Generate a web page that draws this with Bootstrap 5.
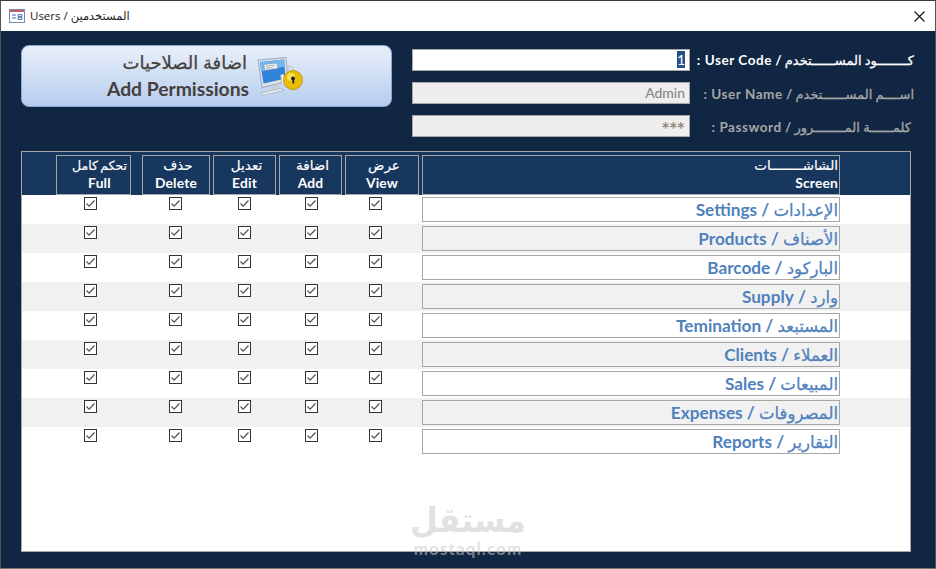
<!DOCTYPE html>
<html lang="ar">
<head>
<meta charset="utf-8">
<title>Users</title>
<link href="https://cdn.jsdelivr.net/npm/bootstrap@5.3.0/dist/css/bootstrap.min.css" rel="stylesheet">
<style>
html,body{height:569px;overflow:hidden;background:#3a3a3a;}
body{font-family:"Lato","DejaVu Sans",sans-serif;}
.app-win{height:568px;margin-top:1px;border-left:1px solid #555;border-right:1px solid #555;border-bottom:1px solid #777;position:relative;overflow:hidden;}
.title-bar{height:30px;background:#fff;padding:0 0 0 8px;flex:none;}
.title-text{font-family:"Open Sans","DejaVu Sans",sans-serif;font-size:11.5px;color:#222;margin-left:5px;}
.close-x{margin-left:auto;margin-right:10px;}
.form-area{background:#112642;padding:14px 0 0 20px;}
.perm-btn{width:371px;height:62px;border:1px solid #8aa8d2;border-radius:8px;background:linear-gradient(#e9eff9,#b6cdee);color:#453f3c;padding-right:88px;}
.perm-ar{font-size:18px;line-height:26px;-webkit-text-stroke:.25px #453f3c;padding-right:2px;}
.perm-en{font-weight:700;font-size:19.3px;line-height:28px;}
.perm-ico{position:relative;top:1px;}
.fields{margin-left:20px;margin-top:4px;gap:11px;width:504px;}
.fld{height:22px;}
.fld-box{width:278px;flex:none;height:22px;border:1px solid #a6a6a6;background:#eee;color:#808080;font-size:14px;text-align:right;padding:0 4px 0 3px;line-height:20px;}
.fld-box.on{background:#fff;color:#fff;}
.fld-box.stars{font-family:"DejaVu Sans",sans-serif;font-size:13.5px;font-weight:700;color:#8f8379;line-height:22px;letter-spacing:.6px;}
.sel{background:#264f8b;display:inline-block;width:8px;line-height:17px;margin-top:1px;font-size:14px;text-align:center;}
.fld-lbl{flex:1;font-size:13.5px;font-weight:700;color:#a6a6a6;padding-right:2px;padding-top:2px;white-space:nowrap;text-align:right;letter-spacing:.55px;}
.fld-lbl.on{color:#fff;padding-top:0;}
.fld-lbl.pw{padding-right:5px;}
.fld-lbl span{font-size:13px;font-weight:400;letter-spacing:0;-webkit-text-stroke:.3px currentColor;}
.panel-box{width:890px;height:401px;margin-top:14px;background:#fff;border:1px solid #a6a6a6;}
.head-row{height:43px;background:#17375e;padding:3px 0 0 34px;}
.hc{height:40px;border:1px solid #a6a6a6;color:#fff;font-weight:700;font-size:13.8px;text-align:center;line-height:16px;margin-right:3px;letter-spacing:.2px;white-space:nowrap;}
.hc span{display:block;}
.hc .ar{font-size:13.5px;font-weight:400;line-height:19px;padding-left:4px;letter-spacing:0;-webkit-text-stroke:.2px #fff;}
.w-full{width:75px;margin-right:11px;padding-left:12px;}
.hc.w-full .ar{padding-left:0;font-size:12.5px;word-spacing:-1px;}
.w-del{width:68px;}
.w-edit{width:63px;}
.w-add{width:63px;}
.w-view{width:74px;}
.w-scr{width:418px;text-align:right;padding-right:1px;margin-right:0;}
.hc.w-scr .ar{padding-left:0;}
.data-row{height:29px;padding-top:2px;}
.data-row.alt{background:#f1f1f1;}
.form-check-input.chk{width:13px;height:13px;margin:0;border:1px solid #333;border-radius:0;background-color:#fff;opacity:1;flex:none;box-shadow:none;
background-image:url("data:image/svg+xml,%3Csvg xmlns='http://www.w3.org/2000/svg' viewBox='0 0 13 13'%3E%3Cpath d='M2.5 6.5l2.6 2.6 5.4-5.6' fill='none' stroke='%23555' stroke-width='1.3'/%3E%3C/svg%3E");background-size:13px 13px;}
.chk-a{margin-left:62px!important;}
.chk-b{margin-left:72px!important;}
.chk-c{margin-left:56px!important;}
.chk-d{margin-left:54px!important;}
.chk-e{margin-left:51px!important;}
.scr-cell{width:418px;height:25px;margin-left:40px;border:1px solid #a6a6a6;color:#4f81bd;font-weight:700;font-size:17.2px;line-height:23px;text-align:right;padding-right:1px;white-space:nowrap;}
.scr-cell span{font-size:16.5px;font-weight:400;-webkit-text-stroke:.25px #4f81bd;}
.alt .scr-cell{background:#f1f1f1;}
.wm{position:absolute;left:397px;top:501px;width:140px;text-align:center;color:#c9c9c9;opacity:.55;pointer-events:none;line-height:1;}
.wm-ar{font-size:34px;line-height:34px;font-weight:700;display:block;transform:scaleX(.93);}
.wm-en{font-size:17px;line-height:20px;font-weight:700;display:block;margin-top:3px;letter-spacing:1.1px;}
</style>
</head>
<body>
<div class="app-win d-flex flex-column">
  <div class="title-bar d-flex align-items-center">
    <svg width="16" height="14" viewBox="0 0 16 14"><rect x=".5" y=".5" width="15" height="13" fill="#fff" stroke="#7d8aa3"/><rect x="1" y="1" width="14" height="2" fill="#b9616a"/><path d="M3 6h4M3 9h4" stroke="#3f6db0" stroke-width="1.2"/><path d="M9 5.5h4v2H9zM9 8.5h4v2H9z" fill="#dfe8f5" stroke="#3f6db0" stroke-width=".8"/></svg>
    <span class="title-text" dir="ltr">Users / المستخدمين</span>
    <svg class="close-x" width="11" height="11" viewBox="0 0 11 11"><path d="M.5.5l10 10M10.5.5l-10 10" stroke="#111" stroke-width="1.1"/></svg>
  </div>
  <div class="form-area flex-grow-1">
    <div class="d-flex align-items-start">
      <div class="perm-btn d-flex justify-content-end align-items-center gap-2">
        <div class="text-end">
          <div class="perm-ar">اضافة الصلاحيات</div>
          <div class="perm-en">Add Permissions</div>
        </div>
        <svg class="perm-ico" width="46" height="40" viewBox="0 0 46 40">
          <path d="M1 3l28-2.500 2 24-26 6z" fill="#dbe1ea" stroke="#8e98a8" stroke-width=".8"/>
          <path d="M3 5l24-2.500 1.500 19-22 5z" fill="#2f83d8"/>
          <path d="M3 5l24-2.500 1 7-24 5z" fill="#72b7ef"/>
          <path d="M7 7.500l13-1.500.6 5.500-13 1.800z" fill="#eef2f7" stroke="#7d8796" stroke-width=".5"/>
          <path d="M9 9.200l9-1M9 11.200l7-.8" stroke="#8b95a3" stroke-width=".7"/>
          <path d="M13 29l9-2 1 5-9 2z" fill="#c9d0da"/>
          <path d="M4 36l20-4.500 3 2-22 5z" fill="#e9edf2" stroke="#9aa3b0" stroke-width=".6"/>
          <path d="M25 27l-1.500-9 3-1 3 7" fill="#eef0f3" stroke="#9ca3ad" stroke-width=".6"/>
          <path d="M30 13l2-4 4 2 1 5" fill="none" stroke="#c8cdd4" stroke-width="1.800"/>
          <circle cx="36" cy="23" r="9.500" fill="#e9bd07" stroke="#b38e05" stroke-width=".8"/>
          <circle cx="34" cy="20" r="4" fill="#f8e25b"/>
          <circle cx="36" cy="21.500" r="2" fill="#222"/>
          <path d="M36 22l.5 4.500" stroke="#222" stroke-width="1.700"/>
        </svg>
      </div>
      <div class="fields d-flex flex-column">
        <div class="fld d-flex align-items-center">
          <div class="fld-box on"><span class="sel">1</span></div>
          <div class="fld-lbl on" dir="rtl"><span>كــــــــود المســــــتخدم</span> / User Code :</div>
        </div>
        <div class="fld d-flex align-items-center">
          <div class="fld-box">Admin</div>
          <div class="fld-lbl" dir="rtl"><span>اســــم المســــــتخدم</span> / User Name :</div>
        </div>
        <div class="fld d-flex align-items-center">
          <div class="fld-box stars">***</div>
          <div class="fld-lbl pw" dir="rtl"><span>كلمــــــة المــــــــرور</span> / Password :</div>
        </div>
      </div>
    </div>
    <div class="panel-box">
      <div class="head-row d-flex">
        <div class="hc w-full"><span class="ar">تحكم كامل</span><span>Full</span></div>
        <div class="hc w-del"><span class="ar">حذف</span><span>Delete</span></div>
        <div class="hc w-edit"><span class="ar">تعديل</span><span>Edit</span></div>
        <div class="hc w-add"><span class="ar">اضافة</span><span>Add</span></div>
        <div class="hc w-view"><span class="ar">عرض</span><span>View</span></div>
        <div class="hc w-scr"><span class="ar">الشاشــــــــات</span><span>Screen</span></div>
      </div>
      <div class="data-row d-flex align-items-start"><input class="form-check-input chk chk-a" type="checkbox" checked><input class="form-check-input chk chk-b" type="checkbox" checked><input class="form-check-input chk chk-c" type="checkbox" checked><input class="form-check-input chk chk-d" type="checkbox" checked><input class="form-check-input chk chk-e" type="checkbox" checked><div class="scr-cell" dir="rtl"><span>الإعدادات</span> / Settings</div></div>
      <div class="data-row alt d-flex align-items-start"><input class="form-check-input chk chk-a" type="checkbox" checked><input class="form-check-input chk chk-b" type="checkbox" checked><input class="form-check-input chk chk-c" type="checkbox" checked><input class="form-check-input chk chk-d" type="checkbox" checked><input class="form-check-input chk chk-e" type="checkbox" checked><div class="scr-cell" dir="rtl"><span>الأصناف</span> / Products</div></div>
      <div class="data-row d-flex align-items-start"><input class="form-check-input chk chk-a" type="checkbox" checked><input class="form-check-input chk chk-b" type="checkbox" checked><input class="form-check-input chk chk-c" type="checkbox" checked><input class="form-check-input chk chk-d" type="checkbox" checked><input class="form-check-input chk chk-e" type="checkbox" checked><div class="scr-cell" dir="rtl"><span>الباركود</span> / Barcode</div></div>
      <div class="data-row alt d-flex align-items-start"><input class="form-check-input chk chk-a" type="checkbox" checked><input class="form-check-input chk chk-b" type="checkbox" checked><input class="form-check-input chk chk-c" type="checkbox" checked><input class="form-check-input chk chk-d" type="checkbox" checked><input class="form-check-input chk chk-e" type="checkbox" checked><div class="scr-cell" dir="rtl"><span>وارد</span> / Supply</div></div>
      <div class="data-row d-flex align-items-start"><input class="form-check-input chk chk-a" type="checkbox" checked><input class="form-check-input chk chk-b" type="checkbox" checked><input class="form-check-input chk chk-c" type="checkbox" checked><input class="form-check-input chk chk-d" type="checkbox" checked><input class="form-check-input chk chk-e" type="checkbox" checked><div class="scr-cell" dir="rtl"><span>المستبعد</span> / Temination</div></div>
      <div class="data-row alt d-flex align-items-start"><input class="form-check-input chk chk-a" type="checkbox" checked><input class="form-check-input chk chk-b" type="checkbox" checked><input class="form-check-input chk chk-c" type="checkbox" checked><input class="form-check-input chk chk-d" type="checkbox" checked><input class="form-check-input chk chk-e" type="checkbox" checked><div class="scr-cell" dir="rtl"><span>العملاء</span> / Clients</div></div>
      <div class="data-row d-flex align-items-start"><input class="form-check-input chk chk-a" type="checkbox" checked><input class="form-check-input chk chk-b" type="checkbox" checked><input class="form-check-input chk chk-c" type="checkbox" checked><input class="form-check-input chk chk-d" type="checkbox" checked><input class="form-check-input chk chk-e" type="checkbox" checked><div class="scr-cell" dir="rtl"><span>المبيعات</span> / Sales</div></div>
      <div class="data-row alt d-flex align-items-start"><input class="form-check-input chk chk-a" type="checkbox" checked><input class="form-check-input chk chk-b" type="checkbox" checked><input class="form-check-input chk chk-c" type="checkbox" checked><input class="form-check-input chk chk-d" type="checkbox" checked><input class="form-check-input chk chk-e" type="checkbox" checked><div class="scr-cell" dir="rtl"><span>المصروفات</span> / Expenses</div></div>
      <div class="data-row d-flex align-items-start"><input class="form-check-input chk chk-a" type="checkbox" checked><input class="form-check-input chk chk-b" type="checkbox" checked><input class="form-check-input chk chk-c" type="checkbox" checked><input class="form-check-input chk chk-d" type="checkbox" checked><input class="form-check-input chk chk-e" type="checkbox" checked><div class="scr-cell" dir="rtl"><span>التقارير</span> / Reports</div></div>
    </div>
  </div>
  <div class="wm"><span class="wm-ar">مستقل</span><span class="wm-en">mostaql.com</span></div>
</div>
</body>
</html>
